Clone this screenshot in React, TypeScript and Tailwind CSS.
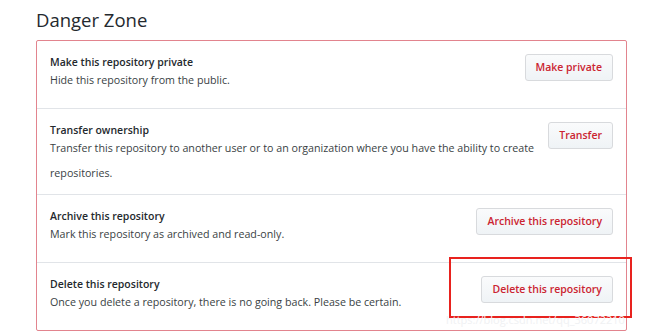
import React from 'react';

const rows = [
  {
    title: 'Make this repository private',
    desc: 'Hide this repository from the public.',
    action: 'Make private',
  },
  {
    title: 'Transfer ownership',
    desc: 'Transfer this repository to another user or to an organization where you have the ability to create repositories.',
    action: 'Transfer',
  },
  {
    title: 'Archive this repository',
    desc: 'Mark this repository as archived and read-only.',
    action: 'Archive this repository',
  },
  {
    title: 'Delete this repository',
    desc: 'Once you delete a repository, there is no going back. Please be certain.',
    action: 'Delete this repository',
  },
];

export default function App() {
  return (
    <div className="relative h-[334px] w-[650px] overflow-hidden bg-white font-['Open_Sans',sans-serif] text-[#24292e]">
      <h2 className="ml-[36px] pt-[7px] text-[18.5px] leading-[26px] font-normal">Danger Zone</h2>

      <div className="mt-[7px] ml-[36px] w-[591px] rounded-[2px] border border-[#e2848e]">
        {rows.map((r, i) => (
          <div
            key={r.title}
            className={`flex items-start justify-between gap-[6px] px-[13px] pt-[13px] ${i === 1 ? 'pb-[8px]' : 'pb-[15px]'} ${i > 0 ? 'border-t border-[#e1e4e8]' : ''}`}
          >
            <div className="min-w-0 flex-1">
              <div className="text-[10.5px] leading-[17px] font-semibold text-[#24292e]">{r.title}</div>
              <div className="-mt-[3px] max-w-[492px] text-[10.7px] leading-[25px] text-[#3a3f44]">{r.desc}</div>
            </div>
            <button className="h-[27px] shrink-0 rounded-[3px] border border-[#d8dadd] bg-gradient-to-b from-[#fafbfc] to-[#eff3f6] px-[10px] text-[10.5px] font-semibold text-[#cb2431]">
              {r.action}
            </button>
          </div>
        ))}
      </div>

      {/* screenshot annotation */}
      <div className="pointer-events-none absolute top-[257px] left-[449px] h-[61px] w-[183px] border-2 border-[#e8221e]" />
      <div className="pointer-events-none absolute top-[313px] left-[446px] text-[11px] leading-[14px] text-[#f0f1f3]">
        https://blog.csdn.net/qq_36072210
      </div>
    </div>
  );
}
